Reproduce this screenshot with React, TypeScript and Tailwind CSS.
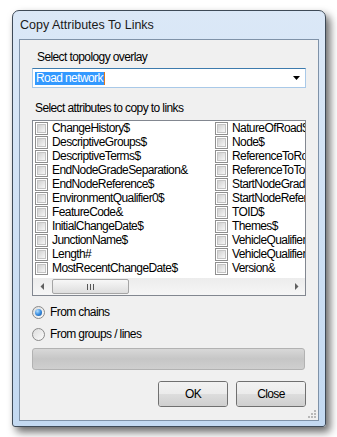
import React from 'react';

const leftItems = [
  'ChangeHistory$',
  'DescriptiveGroups$',
  'DescriptiveTerms$',
  'EndNodeGradeSeparation&',
  'EndNodeReference$',
  'EnvironmentQualifier0$',
  'FeatureCode&',
  'InitialChangeDate$',
  'JunctionName$',
  'Length#',
  'MostRecentChangeDate$',
];

const rightItems = [
  'NatureOfRoad$',
  'Node$',
  'ReferenceToRoadPartition$',
  'ReferenceToTopographicArea$',
  'StartNodeGradeSeparation&',
  'StartNodeReference$',
  'TOID$',
  'Themes$',
  'VehicleQualifier0$',
  'VehicleQualifier1$',
  'Version&',
];

const CheckBox = () => (
  <span className="w-[13px] h-[13px] shrink-0 border border-[#8f8f8f] bg-white p-[1px]">
    <span className="block w-full h-full border border-[#c4c4c4] bg-linear-to-br from-[#d0d0d0] to-[#f7f7f7]" />
  </span>
);

const Item = ({ label }: { label: string }) => (
  <div className="flex items-center h-[14px] pl-[2px]">
    <CheckBox />
    <span className="ml-[4px] whitespace-nowrap leading-[14px]">{label}</span>
  </div>
);

const Radio = ({ checked, label }: { checked?: boolean; label: string }) => (
  <div className="flex items-center h-[16px]">
    <span className="w-[13px] h-[13px] rounded-full border border-[#8a8a8a] bg-linear-to-br from-[#dcdcdc] to-[#fbfbfb] flex items-center justify-center">
      {checked && (
        <span className="w-[7px] h-[7px] rounded-full bg-radial-[at_35%_30%] from-[#b6e0ff] via-[#3a8ee0] to-[#134f9c]" />
      )}
    </span>
    <span className="ml-[5px]">{label}</span>
  </div>
);

const Button = ({ label }: { label: string }) => (
  <div className="w-[70px] h-[26px] rounded-[3px] border border-[#707070] flex flex-col overflow-hidden relative">
    <div className="h-1/2 bg-linear-to-b from-[#f2f2f2] to-[#ebebeb]" />
    <div className="h-1/2 bg-linear-to-b from-[#dddddd] to-[#cfcfcf]" />
    <span className="absolute inset-0 flex items-center justify-center">{label}</span>
  </div>
);

export default function App() {
  return (
    <div className="w-[337px] h-[437px] bg-white pt-[10px] pl-[12px] text-[12px] text-black tracking-[-0.6px] font-['Liberation_Sans',Arial,sans-serif]">
      <div className="w-[314px] h-[417px] rounded-t-[7px] rounded-b-[3px] border border-[#3e4a57] bg-linear-to-b from-[#dbe8f7] to-[#c3d9f1] shadow-[4px_5px_9px_rgba(0,0,0,0.6)] flex flex-col px-[6px] pb-[5px]">
        <div className="h-[28px] flex items-center pl-[1px] pt-[1px] tracking-normal text-[12.5px] text-[#1a1a1a]">
          Copy Attributes To Links
        </div>
        <div className="flex-1 border border-[#7f92a8] bg-[#f0f0f0] relative flex flex-col px-[12px]">
          <div className="mt-[10px] h-[14px] leading-[14px] pl-[5px]">Select topology overlay</div>

          <div className="mt-[4px] h-[20px] border border-[#a9c9e8] border-t-[#3d7bad] bg-white flex items-center pl-[2px] pr-[4px]">
            <span className="h-[13px] leading-[13px] bg-[#3399ff] text-white pl-[1px] pr-[1px]">Road network</span>
            <span className="w-[1px] h-[13px] bg-[#e0781c]" />
            <div className="flex-1" />
            <svg width="8" height="5" viewBox="0 0 8 5">
              <polygon points="0,0 7,0 3.5,4" fill="#000" />
            </svg>
          </div>

          <div className="mt-[13px] h-[14px] leading-[14px] pl-[3px]">Select attributes to copy to links</div>

          <div className="mt-[5px] h-[176px] border border-[#828790] bg-white flex flex-col">
            <div className="flex-1 flex overflow-hidden">
              <div className="w-[180px] shrink-0 flex flex-col">
                {leftItems.map(i => (
                  <Item key={i} label={i} />
                ))}
              </div>
              <div className="w-[180px] shrink-0 flex flex-col">
                {rightItems.map(i => (
                  <Item key={i} label={i} />
                ))}
              </div>
            </div>
            <div className="h-[17px] bg-linear-to-b from-[#ececec] to-[#f6f6f6] flex items-center">
              <div className="w-[17px] h-[17px] flex items-center justify-center">
                <svg width="4" height="7" viewBox="0 0 4 7">
                  <polygon points="4,0 4,7 0.5,3.5" fill="#606060" />
                </svg>
              </div>
              <div className="ml-[2px] w-[77px] h-[15px] rounded-[2px] border border-[#a5a5a5] bg-linear-to-b from-[#f7f7f7] to-[#dedede] flex items-center justify-center gap-[2px]">
                <span className="w-[1px] h-[6px] bg-[#555]" />
                <span className="w-[1px] h-[6px] bg-[#555]" />
                <span className="w-[1px] h-[6px] bg-[#555]" />
              </div>
              <div className="flex-1" />
              <div className="w-[17px] h-[17px] flex items-center justify-center">
                <svg width="4" height="7" viewBox="0 0 4 7">
                  <polygon points="0,0 0,7 3.5,3.5" fill="#606060" />
                </svg>
              </div>
            </div>
          </div>

          <div className="mt-[8px]">
            <Radio checked label="From chains" />
          </div>
          <div className="mt-[6px]">
            <Radio label="From groups / lines" />
          </div>

          <div className="mt-[6px] h-[22px] rounded-[3px] border border-[#b2b2b2] bg-linear-to-b from-[#d8d8d8] via-[#c6c6c6] to-[#cfcfcf] mr-[1px]" />

          <div className="mt-[11px] flex justify-end gap-[8px]">
            <Button label="OK" />
            <Button label="Close" />
          </div>

          <svg className="absolute right-[2px] bottom-[2px]" width="10" height="10" viewBox="0 0 10 10">
            <rect x="8" y="2" width="2" height="2" fill="#b8b8b8" />
            <rect x="5" y="5" width="2" height="2" fill="#b8b8b8" />
            <rect x="8" y="5" width="2" height="2" fill="#b8b8b8" />
            <rect x="2" y="8" width="2" height="2" fill="#b8b8b8" />
            <rect x="5" y="8" width="2" height="2" fill="#b8b8b8" />
            <rect x="8" y="8" width="2" height="2" fill="#b8b8b8" />
          </svg>
        </div>
      </div>
    </div>
  );
}
